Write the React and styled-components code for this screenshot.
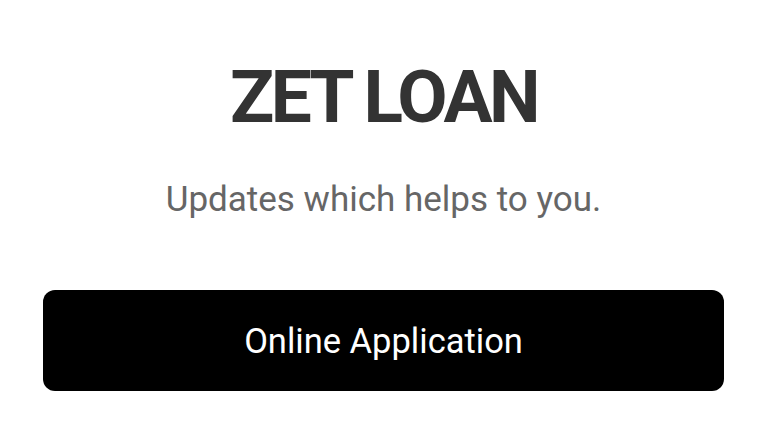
import styled, { createGlobalStyle } from "styled-components";

const GlobalStyle = createGlobalStyle`
  html, body {
    margin: 0;
    padding: 0;
    background: #ffffff;
    font-family: Roboto, "Liberation Sans", sans-serif;
  }
`;

const Page = styled.div`
  width: 768px;
  height: 443px;
  box-sizing: border-box;
  padding: 57px 44px 0 43px;
  display: flex;
  flex-direction: column;
  align-items: center;
`;

const Title = styled.h1`
  margin: 0;
  font-size: 73px;
  line-height: 80px;
  font-weight: 700;
  letter-spacing: -3.5px;
  color: #333333;
`;

const Subtitle = styled.p`
  margin: 43px 0 0;
  font-size: 35px;
  line-height: 40px;
  color: #666666;
`;

const ActionButton = styled.button`
  margin-top: 70px;
  width: 100%;
  height: 101px;
  border: none;
  border-radius: 12px;
  background: #000000;
  color: #ffffff;
  font-family: Roboto, "Liberation Sans", sans-serif;
  font-size: 34.5px;
  cursor: pointer;
`;

export default function App() {
  return (
    <>
      <GlobalStyle />
      <Page>
        <Title>ZET LOAN</Title>
        <Subtitle>Updates which helps to you.</Subtitle>
        <ActionButton>Online Application</ActionButton>
      </Page>
    </>
  );
}
